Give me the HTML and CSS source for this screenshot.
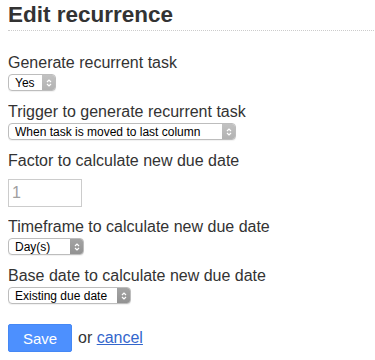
FILE: index.html
```html
<!DOCTYPE html>
<html lang="en">
<head>
    <meta charset="UTF-8">
    <meta name="viewport" content="width=device-width, initial-scale=1.0">
    <title>Edit recurrence</title>
    <link rel="stylesheet" href="styles.css">
</head>
<body>
    <!-- Header -->
    <div class="page-header">
        <h2>Edit recurrence</h2>
    </div>

    <!-- Recurrence form -->
    <form class="recurrence-form">
        <label for="recurrence-status">Generate recurrent task</label>
        <div class="select select-yes">
            <select id="recurrence-status">
                <option>Yes</option>
                <option>No</option>
            </select>
            <span class="select-arrow"><svg width="8" height="12" viewBox="0 0 8 12"><path d="M2 5 L4 3 L6 5 M2 7 L4 9 L6 7"/></svg></span>
        </div>

        <label for="recurrence-trigger">Trigger to generate recurrent task</label>
        <div class="select select-trigger">
            <select id="recurrence-trigger">
                <option>When task is moved to last column</option>
                <option>When task is moved to another column</option>
                <option>When task is closed</option>
            </select>
            <span class="select-arrow"><svg width="8" height="12" viewBox="0 0 8 12"><path d="M2 5 L4 3 L6 5 M2 7 L4 9 L6 7"/></svg></span>
        </div>

        <label for="recurrence-factor">Factor to calculate new due date</label>
        <input type="number" id="recurrence-factor" class="input-number" placeholder="1">

        <label for="recurrence-timeframe">Timeframe to calculate new due date</label>
        <div class="select select-timeframe dark">
            <select id="recurrence-timeframe">
                <option>Day(s)</option>
                <option>Month(s)</option>
                <option>Year(s)</option>
            </select>
            <span class="select-arrow"><svg width="8" height="12" viewBox="0 0 8 12"><path d="M2 5 L4 3 L6 5 M2 7 L4 9 L6 7"/></svg></span>
        </div>

        <label for="recurrence-basedate">Base date to calculate new due date</label>
        <div class="select select-basedate dark">
            <select id="recurrence-basedate">
                <option>Existing due date</option>
                <option>Action date</option>
            </select>
            <span class="select-arrow"><svg width="8" height="12" viewBox="0 0 8 12"><path d="M2 5 L4 3 L6 5 M2 7 L4 9 L6 7"/></svg></span>
        </div>

        <div class="form-actions">
            <button type="submit" class="btn-blue">Save</button>
            <span class="or-cancel">or <a href="#">cancel</a></span>
        </div>
    </form>
</body>
</html>
```

FILE: styles.css
```css
* {
    margin: 0;
    padding: 0;
    box-sizing: border-box;
}

body {
    margin: 0 1px 0 8px;
    font-family: "Liberation Sans", Arial, sans-serif;
    color: #333;
    background: #fff;
}

/* Header */
.page-header h2 {
    font-size: 22.5px;
    font-weight: bold;
    line-height: 25px;
    padding: 2px 0 3px;
    border-bottom: 1px dotted #ccc;
}

/* Form */
.recurrence-form {
    padding-top: 11px;
}

.recurrence-form label {
    display: block;
    font-size: 16px;
    line-height: 20px;
    margin-top: 11px;
    cursor: pointer;
}

.recurrence-form label[for="recurrence-timeframe"] {
    margin-top: 10px;
}

/* Mac style selects */
.select {
    display: flex;
    height: 17px;
    margin-top: 1px;
    border: 1px solid #bdbdbd;
    border-radius: 4px;
    overflow: hidden;
    background: #fff;
    box-shadow: 0 1px 1px rgba(0, 0, 0, 0.06);
}

.select select {
    appearance: none;
    -webkit-appearance: none;
    flex: 1;
    min-width: 0;
    height: 100%;
    border: 0;
    outline: none;
    background: transparent;
    font-family: "Liberation Sans", Arial, sans-serif;
    font-size: 12px;
    color: #000;
    padding: 0 0 0 6px;
}

.select-arrow {
    width: 13px;
    display: flex;
    align-items: center;
    justify-content: center;
    background: linear-gradient(#c2c2c2, #b2b2b2);
}

.select.dark .select-arrow {
    background: linear-gradient(#a4a4a4, #929292);
}

.select-arrow svg path {
    fill: none;
    stroke: #fff;
    stroke-width: 1.2;
}

.select-yes { width: 48px; }
.select-trigger { width: 228px; }
.select-timeframe { width: 76px; }
.select-basedate { width: 123px; }

/* Number input */
.input-number {
    display: block;
    width: 74px;
    height: 28px;
    margin-top: 8px;
    padding: 3px 3px;
    border: 1px solid #ccc;
    font-family: "Liberation Sans", Arial, sans-serif;
    font-size: 16px;
    color: #999;
    -moz-appearance: textfield;
}

.input-number::placeholder {
    color: #a0a0a0;
}

.input-number::-webkit-inner-spin-button,
.input-number::-webkit-outer-spin-button {
    -webkit-appearance: none;
}

/* Actions */
.form-actions {
    display: flex;
    align-items: center;
    gap: 6px;
    margin-top: 20px;
}

.btn-blue {
    width: 64px;
    height: 28px;
    border: 1px solid #4588f5;
    border-radius: 2px;
    background: #4d90fe;
    color: #fff;
    font-family: "Liberation Sans", Arial, sans-serif;
    font-size: 15px;
    cursor: pointer;
}

.or-cancel {
    font-size: 16px;
    color: #333;
}

.or-cancel a {
    color: #36c;
    text-decoration: underline;
}
```
